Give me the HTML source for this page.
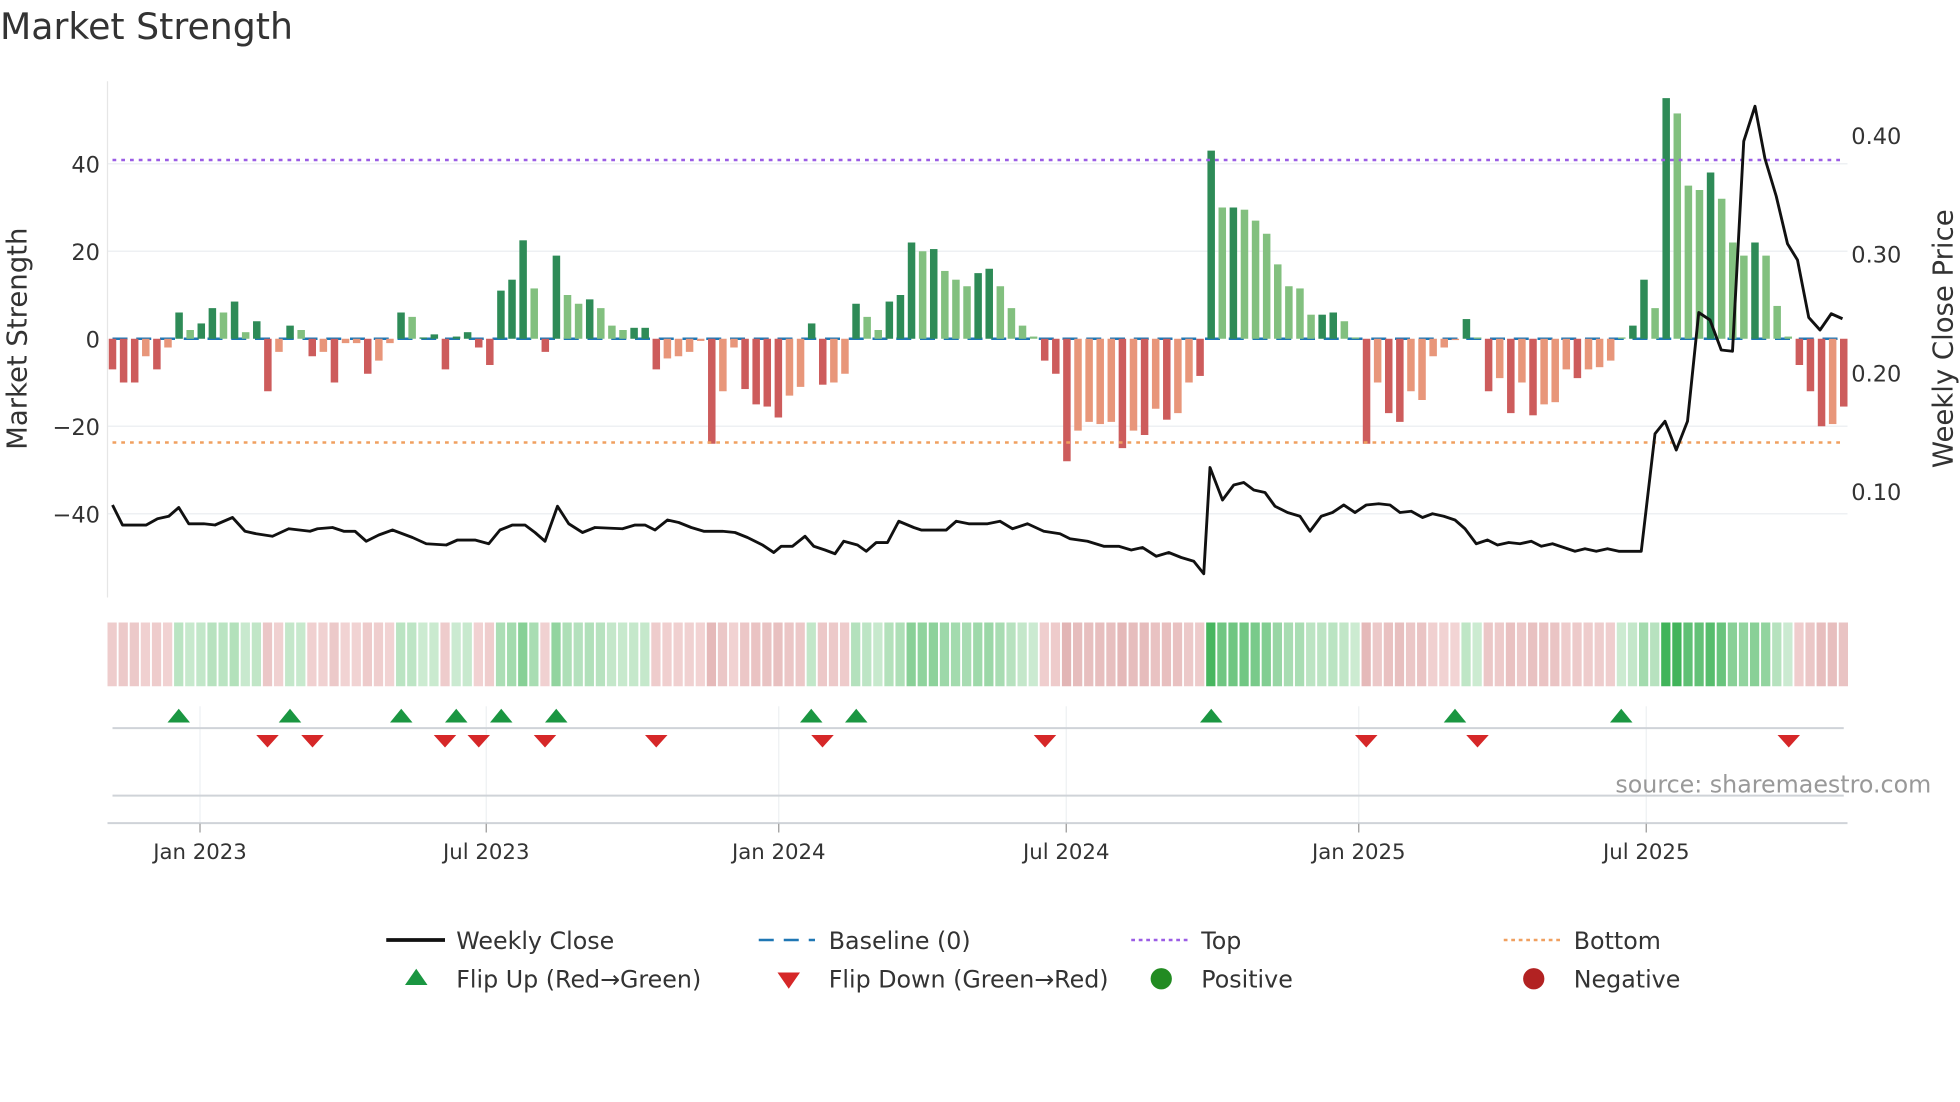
<!DOCTYPE html>
<html><head><meta charset="utf-8"><style>
html,body{margin:0;padding:0;background:#fff;width:1960px;height:1102px;overflow:hidden}
svg{display:block}
text{font-family:"DejaVu Sans","Liberation Sans",sans-serif}
</style></head><body>
<svg id="s" width="1960" height="1102" viewBox="0 0 1568 881.6" xmlns="http://www.w3.org/2000/svg">
<rect width="1568" height="882" fill="#fff"/>
<text x="0" y="31" font-size="29" fill="#333">Market Strength</text>
<!-- grid -->
<g stroke="#eef0f3" stroke-width="1.2">
<line x1="86" x2="1478" y1="131" y2="131"/><line x1="86" x2="1478" y1="201" y2="201"/>
<line x1="86" x2="1478" y1="341" y2="341"/><line x1="86" x2="1478" y1="411" y2="411"/>
</g>
<line x1="86" x2="86" y1="65" y2="478" stroke="#e6e6e6"/>
<g font-size="18" fill="#333" text-anchor="end">
<text x="80" y="138">40</text><text x="80" y="208">20</text><text x="80" y="278">0</text>
<text x="80" y="348">−20</text><text x="80" y="418">−40</text>
</g>
<g font-size="18" fill="#333">
<text x="1481" y="115">0.40</text><text x="1481" y="210">0.30</text>
<text x="1481" y="305">0.20</text><text x="1481" y="400">0.10</text>
</g>
<text transform="translate(21,271) rotate(-90)" font-size="22" fill="#333" text-anchor="middle">Market Strength</text>
<text transform="translate(1562,271) rotate(-90)" font-size="22" fill="#333" text-anchor="middle">Weekly Close Price</text>
<line x1="90" x2="1475" y1="271" y2="271" stroke="#1f77b4" stroke-width="2" stroke-dasharray="12,7"/>
<g id="bars"></g>
<line x1="90" x2="1475" y1="128" y2="128" stroke="#9b5de5" stroke-width="2" stroke-dasharray="3,4"/>
<line x1="90" x2="1475" y1="354" y2="354" stroke="#f0a060" stroke-width="2" stroke-dasharray="3,4"/>
<polyline fill="none" stroke="#111" stroke-width="2.3" stroke-linejoin="round" points="90,404 98,420 117,420 126,415 135,413 143,406 151,419 163,419 172,420 186,414 196,425 205,427 218,429 231,423 248,425 254,423 266,422 275,425 284,425 293,433 303,428 314,424 330,430 341,435 357,436 366,432 380,432 391,435 400,424 410,420 420,420 428,426 436,433 446,405 455,419 466,426 476,422 498,423 508,420 516,420 524,424 534,416 543,418 553,422 563,425 578,425 588,426 598,430 610,436 619,442 625,437 634,437 644,429 651,437 660,440 668,443 675,433 686,436 693,441 701,434 710,434 719,417 731,422 737,424 757,424 765,417 775,419 790,419 800,417 810,423 822,419 835,425 848,427 856,431 870,433 883,437 895,437 905,440 914,438 925,445 935,442 945,446 955,449 963,459 968,374 978,400 987,388 995,386 1003,392 1012,394 1020,405 1030,410 1040,413 1048,425 1057,413 1066,410 1075,404 1084,410 1093,404 1103,403 1112,404 1120,410 1129,409 1138,414 1146,411 1155,413 1164,416 1172,423 1181,435 1190,432 1198,436 1207,434 1216,435 1225,433 1233,437 1242,435 1251,438 1260,441 1268,439 1277,441 1286,439 1295,441 1313,441 1324,347 1332,337 1341,360 1350,337 1359,250 1368,256 1377,280 1386,281 1395,113 1404,85 1412,127 1421,157 1430,195 1438,208 1447,254 1456,264 1465,251 1474,255"/>
<g id="strip"></g>
<!-- vertical grid lower -->
<g stroke="#eef0f3" stroke-width="1">
<line x1="160" x2="160" y1="565" y2="658"/><line x1="389" x2="389" y1="565" y2="658"/>
<line x1="623" x2="623" y1="565" y2="658"/><line x1="853" x2="853" y1="565" y2="658"/>
<line x1="1087" x2="1087" y1="565" y2="658"/><line x1="1317" x2="1317" y1="565" y2="658"/>
</g>
<line x1="90" x2="1475" y1="582.5" y2="582.5" stroke="#cfd3d8" stroke-width="1.6"/>
<line x1="90" x2="1475" y1="636.5" y2="636.5" stroke="#cfd3d8" stroke-width="1.6"/>
<line x1="86" x2="1478" y1="658.5" y2="658.5" stroke="#cfd3d8" stroke-width="1.6"/>
<g id="marks"></g>
<g stroke="#999" stroke-width="1">
<line x1="160" x2="160" y1="659" y2="666"/><line x1="389" x2="389" y1="659" y2="666"/>
<line x1="623" x2="623" y1="659" y2="666"/><line x1="853" x2="853" y1="659" y2="666"/>
<line x1="1087" x2="1087" y1="659" y2="666"/><line x1="1317" x2="1317" y1="659" y2="666"/>
</g>
<g font-size="17" fill="#333" text-anchor="middle">
<text x="160" y="687">Jan 2023</text><text x="389" y="687">Jul 2023</text>
<text x="623" y="687">Jan 2024</text><text x="853" y="687">Jul 2024</text>
<text x="1087" y="687">Jan 2025</text><text x="1317" y="687">Jul 2025</text>
</g>
<text x="1545" y="634" font-size="19" fill="#999" text-anchor="end">source: sharemaestro.com</text>
<!-- legend -->
<g font-size="19" fill="#333">
<line x1="309" x2="356" y1="752" y2="752" stroke="#111" stroke-width="3"/>
<text x="365" y="759">Weekly Close</text>
<line x1="607" x2="652" y1="752" y2="752" stroke="#1f77b4" stroke-width="2" stroke-dasharray="12,8"/>
<text x="663" y="759">Baseline (0)</text>
<line x1="905" x2="950" y1="752" y2="752" stroke="#9b5de5" stroke-width="2" stroke-dasharray="3,3"/>
<text x="961" y="759">Top</text>
<line x1="1203" x2="1248" y1="752" y2="752" stroke="#f0a060" stroke-width="2" stroke-dasharray="3,3"/>
<text x="1259" y="759">Bottom</text>
<polygon points="324,788 342,788 333,775" fill="#1a9641"/>
<text x="365" y="790">Flip Up (Red→Green)</text>
<polygon points="622,778 640,778 631,791" fill="#d62728"/>
<text x="663" y="790">Flip Down (Green→Red)</text>
<circle cx="929" cy="783" r="8.5" fill="#228b22"/>
<text x="961" y="790">Positive</text>
<circle cx="1227" cy="783" r="8.5" fill="#b22222"/>
<text x="1259" y="790">Negative</text>
</g>
</svg>
<script>
var v=[-7,-10,-10,-4,-7,-2,6,2,3.5,7,6,8.5,1.5,4,-12,-3,3,2,-4,-3,-10,-1,-1,-8,-5,-1,6,5,0.3,1,-7,0.5,1.5,-2,-6,11,13.5,22.5,11.5,-3,19,10,8,9,7,3,2,2.5,2.5,-7,-4.5,-4,-3,-0.5,-24,-12,-2,-11.5,-15,-15.5,-18,-13,-11,3.5,-10.5,-10,-8,8,5,2,8.5,10,22,20,20.5,15.5,13.5,12,15,16,12,7,3,0.5,-5,-8,-28,-21,-19,-19.5,-19,-25,-21,-22,-16,-18.5,-17,-10,-8.5,43,30,30,29.5,27,24,17,12,11.5,5.5,5.5,6,4,0.3,-24,-10,-17,-19,-12,-14,-4,-2,-0.3,4.5,0.3,-12,-9,-17,-10,-17.5,-15,-14.5,-7,-9,-7,-6.5,-5,0.3,3,13.5,7,55,51.5,35,34,38,32,22,19,22,19,7.5,0.5,-6,-12,-20,-19.5,-15.5];
var dark=[1,1,1,0,1,0,1,0,1,1,0,1,0,1,1,0,1,0,1,0,1,0,0,1,0,0,1,0,1,1,1,1,1,1,1,1,1,1,0,1,1,0,0,1,0,0,0,1,1,1,0,0,0,0,1,0,0,1,1,1,1,0,0,1,1,0,0,1,0,0,1,1,1,0,1,0,0,0,1,1,0,0,0,0,1,1,1,0,0,0,0,1,0,1,0,1,0,0,1,1,0,1,0,0,0,0,0,0,0,1,1,0,0,1,0,1,1,0,0,0,0,0,1,0,1,0,1,0,1,0,0,0,1,0,0,0,0,1,1,0,1,0,0,0,1,0,0,0,1,0,0,0,1,1,1,0,1];
var NS="http://www.w3.org/2000/svg",b=document.getElementById("bars"),st=document.getElementById("strip"),n=v.length,dx=(1475-90)/(n-1);
function mk(t,a,p){var e=document.createElementNS(NS,t);for(var k in a)e.setAttribute(k,a[k]);p.appendChild(e);}
for(var i=0;i<n;i++){var x=90+dx*i,val=v[i],h=Math.abs(val)*3.5,d=dark[i];
var c=val>=0?(d?"#2e8b57":"#82c07f"):(d?"#cd5c5c":"#e8967a");
mk("rect",{x:x-3,y:val>=0?271-h:271,width:6,height:Math.max(h,1),fill:c},b);
var t=Math.min(Math.abs(val)/45,1),col;
if(val>=0){col="rgb("+Math.round(205-140*t)+","+Math.round(235-55*t)+","+Math.round(210-120*t)+")";}
else{col="rgb("+Math.round(242-25*t)+","+Math.round(212-50*t)+","+Math.round(212-50*t)+")";}
mk("rect",{x:x-4,y:498,width:7.4,height:51,fill:col},st);}
var m=document.getElementById("marks");
[143,232,321,365,401,445,649,685,969,1164,1297].forEach(function(x){mk("polygon",{points:(x-9)+",578 "+(x+9)+",578 "+x+",567",fill:"#1a9641"},m);});
[214,250,356,383,436,525,658,836,1093,1182,1431].forEach(function(x){mk("polygon",{points:(x-9)+",588 "+(x+9)+",588 "+x+",598",fill:"#d62728"},m);});
</script>
</body></html>
